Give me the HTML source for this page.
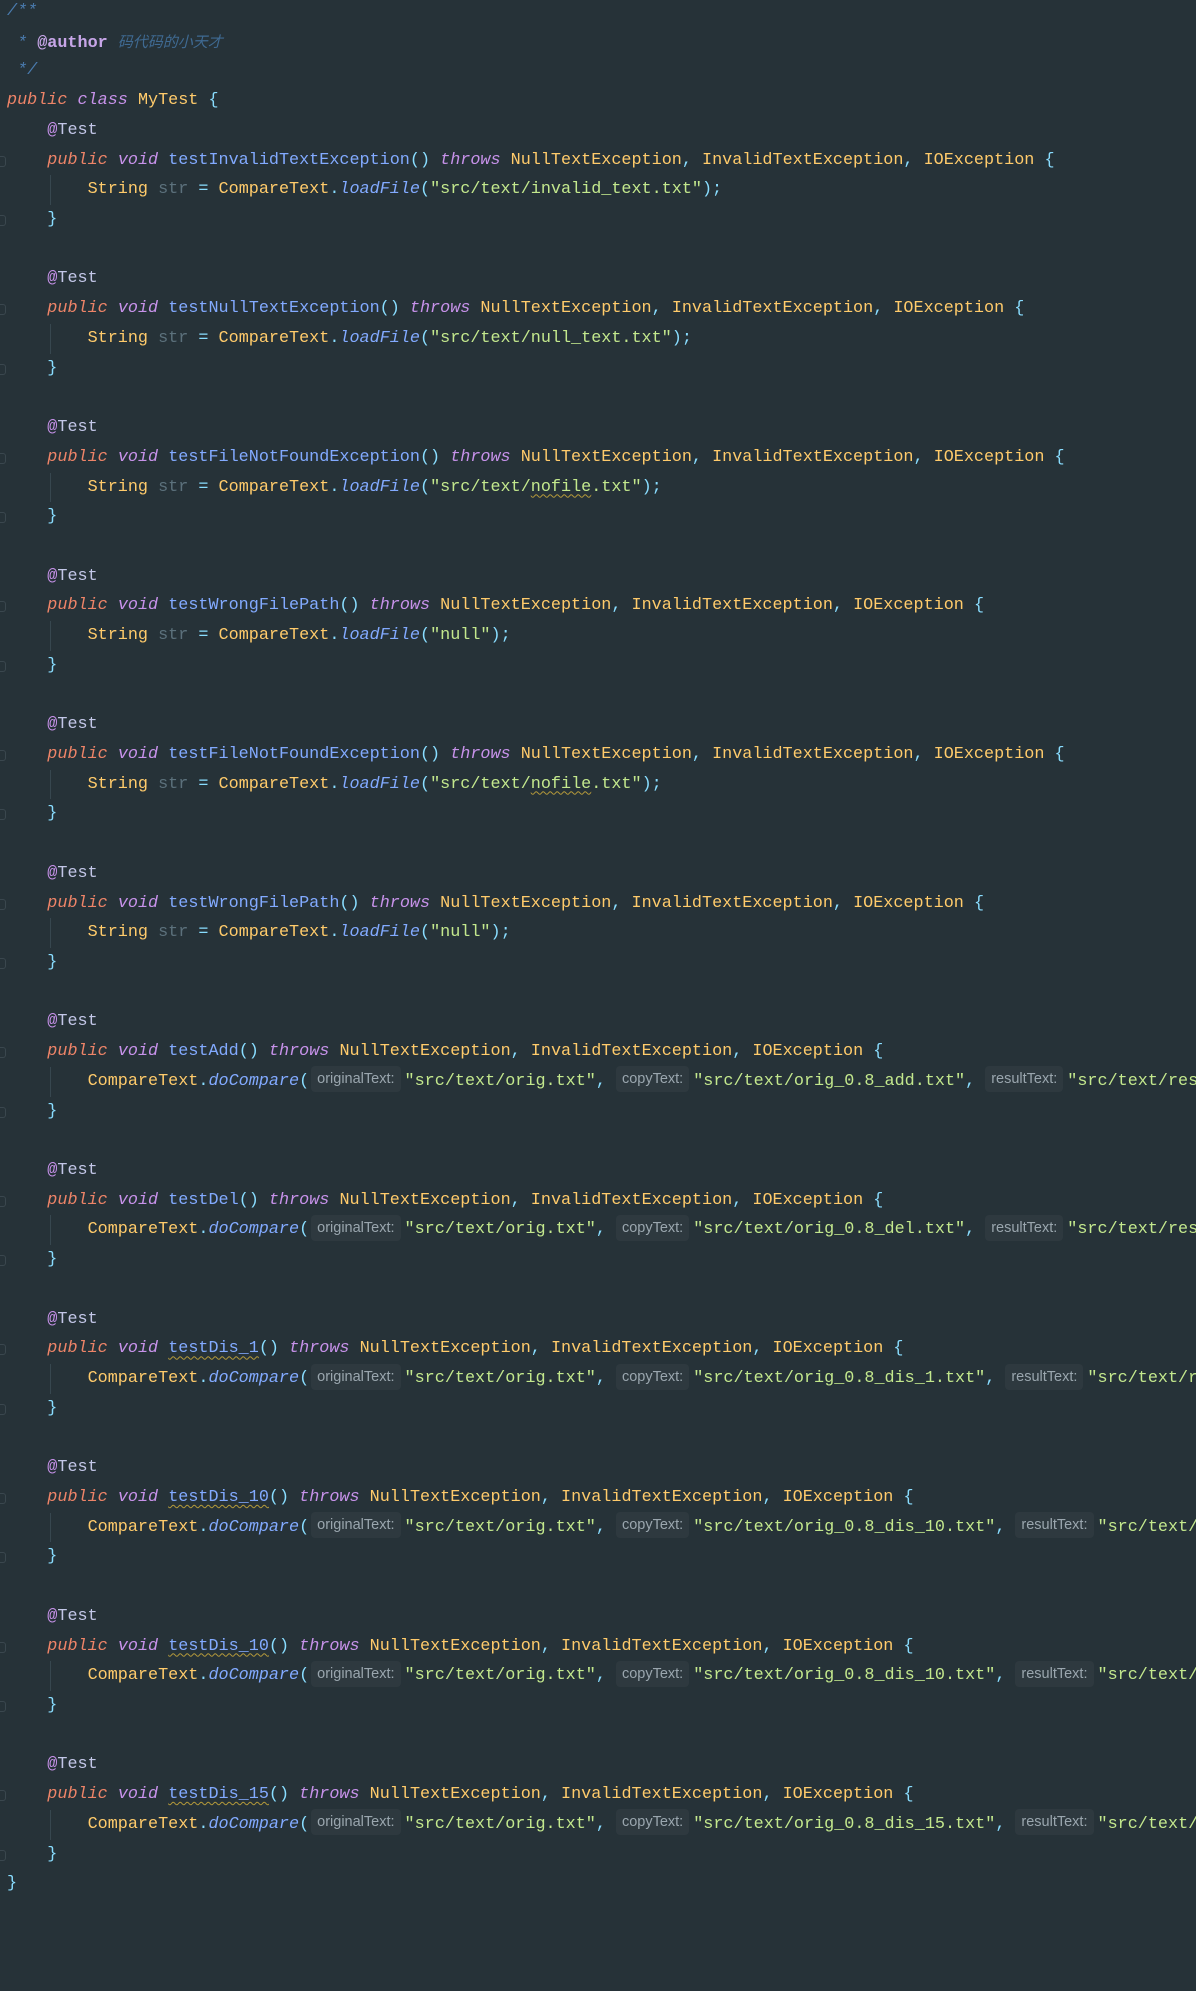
<!DOCTYPE html>
<html><head><meta charset="utf-8"><style>
html,body{margin:0;padding:0;background:#263238;width:1196px;height:1991px;overflow:hidden}
#c{position:absolute;left:0;top:-3px;padding-left:7px;font-family:"Liberation Mono","Noto Sans CJK SC",monospace;font-size:16.8px;color:#c3cee3;width:1189px;overflow:hidden}
.l{height:29.73px;line-height:29.73px;position:relative;white-space:pre}
.cm{color:#4a7bae;font-style:italic}
.ca{color:#c7a6e8;font-weight:bold}
.cz{color:#3f6a92;font-style:italic;font-family:"Noto Sans CJK SC",sans-serif;font-size:15px}
.pu{color:#ee8468;font-style:italic}
.kw{color:#c792ea;font-style:italic}
.ty{color:#ffcb6b}
.fn{color:#82aaff}
.fi{color:#82aaff;font-style:italic}
.p{color:#89ddff}
.s{color:#c3e88d}
.v{color:#5c717c}
.an{color:#c792ea}
.at{color:#c3c7e8}
.w{text-decoration:underline wavy #b59a3a;text-underline-offset:3px;text-decoration-thickness:1px}
.h{display:inline-block;font-family:"Liberation Sans",sans-serif;font-size:14.5px;color:#9aa6ae;background:#2e393f;border-radius:4px;height:26px;line-height:26px;padding:0 6px;margin:0 4px 0 10px;vertical-align:middle;position:relative;top:-1px}
.h1{margin-left:2px}
.g{position:absolute;left:43px;top:0;width:1px;height:29.73px;background:#37474f}
.f{position:absolute;left:-7px;top:10px;width:5px;height:9px;border:1px solid #3a474e;border-left:none;border-radius:0 3px 3px 0}
</style></head><body><div id="c">
<div class="l"><span class="cm">/**</span></div>
<div class="l"><span class="cm"> * </span><span class="ca">@author</span> <span class="cz">码代码的小天才</span></div>
<div class="l"><span class="cm"> */</span></div>
<div class="l"><span class="pu">public</span> <span class="kw">class</span> <span class="ty">MyTest</span> <span class="p">{</span></div>
<div class="l">    <span class="an">@</span><span class="at">Test</span></div>
<div class="l"><i class="f"></i>    <span class="pu">public</span> <span class="kw">void</span> <span class="fn">testInvalidTextException</span><span class="p">()</span> <span class="kw">throws</span> <span class="ty">NullTextException</span><span class="p">,</span> <span class="ty">InvalidTextException</span><span class="p">,</span> <span class="ty">IOException</span> <span class="p">{</span></div>
<div class="l"><i class="g"></i>        <span class="ty">String</span> <span class="v">str</span> <span class="p">=</span> <span class="ty">CompareText</span><span class="p">.</span><span class="fi">loadFile</span><span class="p">(</span><span class="s">"src/text/invalid_text.txt"</span><span class="p">);</span></div>
<div class="l"><i class="f"></i>    <span class="p">}</span></div>
<div class="l"> </div>
<div class="l">    <span class="an">@</span><span class="at">Test</span></div>
<div class="l"><i class="f"></i>    <span class="pu">public</span> <span class="kw">void</span> <span class="fn">testNullTextException</span><span class="p">()</span> <span class="kw">throws</span> <span class="ty">NullTextException</span><span class="p">,</span> <span class="ty">InvalidTextException</span><span class="p">,</span> <span class="ty">IOException</span> <span class="p">{</span></div>
<div class="l"><i class="g"></i>        <span class="ty">String</span> <span class="v">str</span> <span class="p">=</span> <span class="ty">CompareText</span><span class="p">.</span><span class="fi">loadFile</span><span class="p">(</span><span class="s">"src/text/null_text.txt"</span><span class="p">);</span></div>
<div class="l"><i class="f"></i>    <span class="p">}</span></div>
<div class="l"> </div>
<div class="l">    <span class="an">@</span><span class="at">Test</span></div>
<div class="l"><i class="f"></i>    <span class="pu">public</span> <span class="kw">void</span> <span class="fn">testFileNotFoundException</span><span class="p">()</span> <span class="kw">throws</span> <span class="ty">NullTextException</span><span class="p">,</span> <span class="ty">InvalidTextException</span><span class="p">,</span> <span class="ty">IOException</span> <span class="p">{</span></div>
<div class="l"><i class="g"></i>        <span class="ty">String</span> <span class="v">str</span> <span class="p">=</span> <span class="ty">CompareText</span><span class="p">.</span><span class="fi">loadFile</span><span class="p">(</span><span class="s">"src/text/<span class="w">nofile</span>.txt"</span><span class="p">);</span></div>
<div class="l"><i class="f"></i>    <span class="p">}</span></div>
<div class="l"> </div>
<div class="l">    <span class="an">@</span><span class="at">Test</span></div>
<div class="l"><i class="f"></i>    <span class="pu">public</span> <span class="kw">void</span> <span class="fn">testWrongFilePath</span><span class="p">()</span> <span class="kw">throws</span> <span class="ty">NullTextException</span><span class="p">,</span> <span class="ty">InvalidTextException</span><span class="p">,</span> <span class="ty">IOException</span> <span class="p">{</span></div>
<div class="l"><i class="g"></i>        <span class="ty">String</span> <span class="v">str</span> <span class="p">=</span> <span class="ty">CompareText</span><span class="p">.</span><span class="fi">loadFile</span><span class="p">(</span><span class="s">"null"</span><span class="p">);</span></div>
<div class="l"><i class="f"></i>    <span class="p">}</span></div>
<div class="l"> </div>
<div class="l">    <span class="an">@</span><span class="at">Test</span></div>
<div class="l"><i class="f"></i>    <span class="pu">public</span> <span class="kw">void</span> <span class="fn">testFileNotFoundException</span><span class="p">()</span> <span class="kw">throws</span> <span class="ty">NullTextException</span><span class="p">,</span> <span class="ty">InvalidTextException</span><span class="p">,</span> <span class="ty">IOException</span> <span class="p">{</span></div>
<div class="l"><i class="g"></i>        <span class="ty">String</span> <span class="v">str</span> <span class="p">=</span> <span class="ty">CompareText</span><span class="p">.</span><span class="fi">loadFile</span><span class="p">(</span><span class="s">"src/text/<span class="w">nofile</span>.txt"</span><span class="p">);</span></div>
<div class="l"><i class="f"></i>    <span class="p">}</span></div>
<div class="l"> </div>
<div class="l">    <span class="an">@</span><span class="at">Test</span></div>
<div class="l"><i class="f"></i>    <span class="pu">public</span> <span class="kw">void</span> <span class="fn">testWrongFilePath</span><span class="p">()</span> <span class="kw">throws</span> <span class="ty">NullTextException</span><span class="p">,</span> <span class="ty">InvalidTextException</span><span class="p">,</span> <span class="ty">IOException</span> <span class="p">{</span></div>
<div class="l"><i class="g"></i>        <span class="ty">String</span> <span class="v">str</span> <span class="p">=</span> <span class="ty">CompareText</span><span class="p">.</span><span class="fi">loadFile</span><span class="p">(</span><span class="s">"null"</span><span class="p">);</span></div>
<div class="l"><i class="f"></i>    <span class="p">}</span></div>
<div class="l"> </div>
<div class="l">    <span class="an">@</span><span class="at">Test</span></div>
<div class="l"><i class="f"></i>    <span class="pu">public</span> <span class="kw">void</span> <span class="fn">testAdd</span><span class="p">()</span> <span class="kw">throws</span> <span class="ty">NullTextException</span><span class="p">,</span> <span class="ty">InvalidTextException</span><span class="p">,</span> <span class="ty">IOException</span> <span class="p">{</span></div>
<div class="l"><i class="g"></i>        <span class="ty">CompareText</span><span class="p">.</span><span class="fi">doCompare</span><span class="p">(</span><span class="h h1">originalText:</span><span class="s">"src/text/orig.txt"</span><span class="p">,</span><span class="h">copyText:</span><span class="s">"src/text/orig_0.8_add.txt"</span><span class="p">,</span><span class="h">resultText:</span><span class="s">"src/text/result_add.txt"</span><span class="p">);</span></div>
<div class="l"><i class="f"></i>    <span class="p">}</span></div>
<div class="l"> </div>
<div class="l">    <span class="an">@</span><span class="at">Test</span></div>
<div class="l"><i class="f"></i>    <span class="pu">public</span> <span class="kw">void</span> <span class="fn">testDel</span><span class="p">()</span> <span class="kw">throws</span> <span class="ty">NullTextException</span><span class="p">,</span> <span class="ty">InvalidTextException</span><span class="p">,</span> <span class="ty">IOException</span> <span class="p">{</span></div>
<div class="l"><i class="g"></i>        <span class="ty">CompareText</span><span class="p">.</span><span class="fi">doCompare</span><span class="p">(</span><span class="h h1">originalText:</span><span class="s">"src/text/orig.txt"</span><span class="p">,</span><span class="h">copyText:</span><span class="s">"src/text/orig_0.8_del.txt"</span><span class="p">,</span><span class="h">resultText:</span><span class="s">"src/text/result_del.txt"</span><span class="p">);</span></div>
<div class="l"><i class="f"></i>    <span class="p">}</span></div>
<div class="l"> </div>
<div class="l">    <span class="an">@</span><span class="at">Test</span></div>
<div class="l"><i class="f"></i>    <span class="pu">public</span> <span class="kw">void</span> <span class="fn w">testDis_1</span><span class="p">()</span> <span class="kw">throws</span> <span class="ty">NullTextException</span><span class="p">,</span> <span class="ty">InvalidTextException</span><span class="p">,</span> <span class="ty">IOException</span> <span class="p">{</span></div>
<div class="l"><i class="g"></i>        <span class="ty">CompareText</span><span class="p">.</span><span class="fi">doCompare</span><span class="p">(</span><span class="h h1">originalText:</span><span class="s">"src/text/orig.txt"</span><span class="p">,</span><span class="h">copyText:</span><span class="s">"src/text/orig_0.8_dis_1.txt"</span><span class="p">,</span><span class="h">resultText:</span><span class="s">"src/text/result_dis_1.txt"</span><span class="p">);</span></div>
<div class="l"><i class="f"></i>    <span class="p">}</span></div>
<div class="l"> </div>
<div class="l">    <span class="an">@</span><span class="at">Test</span></div>
<div class="l"><i class="f"></i>    <span class="pu">public</span> <span class="kw">void</span> <span class="fn w">testDis_10</span><span class="p">()</span> <span class="kw">throws</span> <span class="ty">NullTextException</span><span class="p">,</span> <span class="ty">InvalidTextException</span><span class="p">,</span> <span class="ty">IOException</span> <span class="p">{</span></div>
<div class="l"><i class="g"></i>        <span class="ty">CompareText</span><span class="p">.</span><span class="fi">doCompare</span><span class="p">(</span><span class="h h1">originalText:</span><span class="s">"src/text/orig.txt"</span><span class="p">,</span><span class="h">copyText:</span><span class="s">"src/text/orig_0.8_dis_10.txt"</span><span class="p">,</span><span class="h">resultText:</span><span class="s">"src/text/result_dis_10.txt"</span><span class="p">);</span></div>
<div class="l"><i class="f"></i>    <span class="p">}</span></div>
<div class="l"> </div>
<div class="l">    <span class="an">@</span><span class="at">Test</span></div>
<div class="l"><i class="f"></i>    <span class="pu">public</span> <span class="kw">void</span> <span class="fn w">testDis_10</span><span class="p">()</span> <span class="kw">throws</span> <span class="ty">NullTextException</span><span class="p">,</span> <span class="ty">InvalidTextException</span><span class="p">,</span> <span class="ty">IOException</span> <span class="p">{</span></div>
<div class="l"><i class="g"></i>        <span class="ty">CompareText</span><span class="p">.</span><span class="fi">doCompare</span><span class="p">(</span><span class="h h1">originalText:</span><span class="s">"src/text/orig.txt"</span><span class="p">,</span><span class="h">copyText:</span><span class="s">"src/text/orig_0.8_dis_10.txt"</span><span class="p">,</span><span class="h">resultText:</span><span class="s">"src/text/result_dis_10.txt"</span><span class="p">);</span></div>
<div class="l"><i class="f"></i>    <span class="p">}</span></div>
<div class="l"> </div>
<div class="l">    <span class="an">@</span><span class="at">Test</span></div>
<div class="l"><i class="f"></i>    <span class="pu">public</span> <span class="kw">void</span> <span class="fn w">testDis_15</span><span class="p">()</span> <span class="kw">throws</span> <span class="ty">NullTextException</span><span class="p">,</span> <span class="ty">InvalidTextException</span><span class="p">,</span> <span class="ty">IOException</span> <span class="p">{</span></div>
<div class="l"><i class="g"></i>        <span class="ty">CompareText</span><span class="p">.</span><span class="fi">doCompare</span><span class="p">(</span><span class="h h1">originalText:</span><span class="s">"src/text/orig.txt"</span><span class="p">,</span><span class="h">copyText:</span><span class="s">"src/text/orig_0.8_dis_15.txt"</span><span class="p">,</span><span class="h">resultText:</span><span class="s">"src/text/result_dis_15.txt"</span><span class="p">);</span></div>
<div class="l"><i class="f"></i>    <span class="p">}</span></div>
<div class="l"><span class="p">}</span></div>
</div></body></html>
